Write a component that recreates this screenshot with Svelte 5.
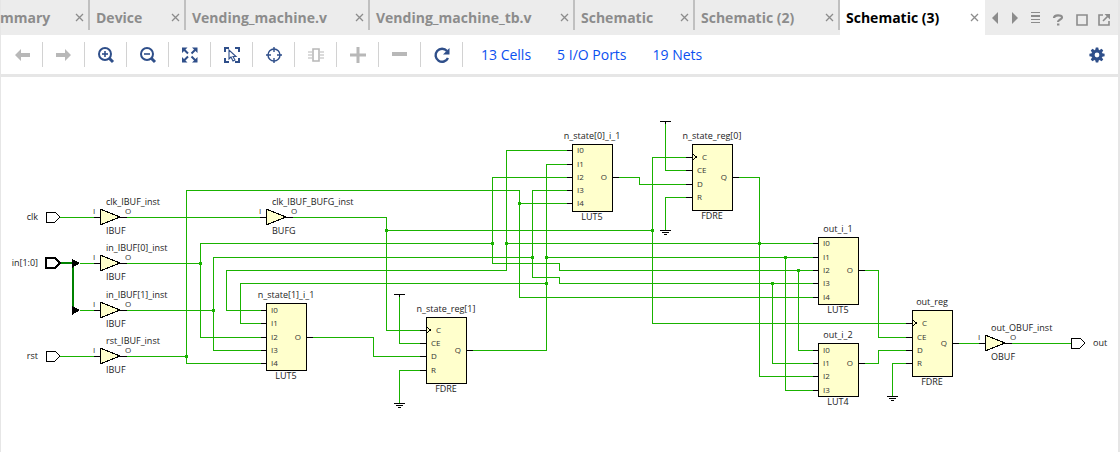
<script>
  const tabs = [
    { label: 'mmary', width: 90 },
    { label: 'Device', width: 96 },
    { label: 'Vending_machine.v', width: 184 },
    { label: 'Vending_machine_tb.v', width: 205 },
    { label: 'Schematic', width: 120 },
    { label: 'Schematic (2)', width: 145 },
    { label: 'Schematic (3)', width: 145, active: true }
  ];

  const tools = [
    { id: 'back', label: 'Back', off: true },
    { id: 'forward', label: 'Forward', off: true },
    { id: 'zoomin', label: 'Zoom in' },
    { id: 'zoomout', label: 'Zoom out' },
    { id: 'fit', label: 'Zoom fit' },
    { id: 'select', label: 'Select area' },
    { id: 'target', label: 'Autofit selection' },
    { id: 'chip', label: 'Expand cell', off: true },
    { id: 'plus', label: 'Add', off: true },
    { id: 'minus', label: 'Remove', off: true },
    { id: 'refresh', label: 'Regenerate' }
  ];

  const stats = ['13 Cells', '5 I/O Ports', '19 Nets'];

  const wires = [
    'M60 217H94', 'M80 263H94', 'M80 310H94', 'M60 356H94',
    'M126 217H261', 'M292 217H386V330H420', 'M386 230H652',
    'M126 263H200', 'M492 243H200V337H261',
    'M126 310H213', 'M532 257H213V350H261',
    'M126 356H186', 'M261 363H186V190H519V297H813', 'M519 203H567',
    'M261 310H226V270H506V150H567', 'M506 243H813',
    'M261 323H240V283H546', 'M472 350H546V164H567', 'M546 257H813',
    'M567 177H492V263H559V270H813',
    'M567 190H532V277H559V283H813',
    'M312 337H373V356H420',
    'M399 296V343H420', 'M420 370H399V403',
    'M618 177H639V184H686',
    'M686 157H652V323H906',
    'M665 123V170H686', 'M686 197H665V230',
    'M738 177H759V376H813',
    'M772 283V363H813', 'M785 257V390H813', 'M798 270V350H813',
    'M864 270H878V337H906', 'M864 363H878V350H906',
    'M906 363H892V396', 'M958 343H979', 'M1011 343H1071'
  ];

  const joints = [
    [386, 230], [200, 263], [213, 310], [186, 356], [519, 203], [492, 243], [506, 243],
    [532, 257], [546, 257], [546, 283], [652, 230], [759, 243], [785, 257], [798, 270], [772, 283]
  ];

  const lut = (name, type, x, y, h, ys, out) => ({
    name, type, x, y, h, out, q: 'O', stub: 5,
    pins: ys.map((py, i) => ({ t: 'I' + i, y: py }))
  });
  const reg = (name, x, y, ys, out) => ({
    name, type: 'FDRE', x, y, h: 66, out, q: 'Q', stub: 6, clock: true,
    pins: ['C', 'CE', 'D', 'R'].map((t, i) => ({ t, y: ys[i] }))
  });
  const cells = [
    lut('n_state[1]_i_1', 'LUT5', 266, 303, 67, [310, 323, 337, 350, 363], 337),
    lut('n_state[0]_i_1', 'LUT5', 572, 144, 67, [150, 164, 177, 190, 203], 177),
    lut('out_i_1', 'LUT5', 818, 237, 67, [243, 257, 270, 283, 297], 270),
    lut('out_i_2', 'LUT4', 818, 343, 53, [350, 363, 376, 390], 363),
    reg('n_state_reg[1]', 426, 317, [330, 343, 356, 370], 350),
    reg('n_state_reg[0]', 692, 144, [157, 170, 184, 197], 177),
    reg('out_reg', 912, 310, [323, 337, 350, 363], 343)
  ];

  const buffers = [
    { name: 'clk_IBUF_inst', type: 'IBUF', x: 100, y: 217 },
    { name: 'in_IBUF[0]_inst', type: 'IBUF', x: 100, y: 263 },
    { name: 'in_IBUF[1]_inst', type: 'IBUF', x: 100, y: 310 },
    { name: 'rst_IBUF_inst', type: 'IBUF', x: 100, y: 356 },
    { name: 'clk_IBUF_BUFG_inst', type: 'BUFG', x: 266, y: 217 },
    { name: 'out_OBUF_inst', type: 'OBUF', x: 985, y: 343 }
  ];

  const ports = [
    { name: 'clk', x: 46, y: 217 },
    { name: 'in[1:0]', x: 46, y: 263, bus: true },
    { name: 'rst', x: 46, y: 356 },
    { name: 'out', x: 1071, y: 343, output: true }
  ];

  const supplies = [[399, 294], [665, 121]];
  const grounds = [[399, 403], [665, 230], [892, 396]];
</script>

<div class="window">
  <header class="tabbar">
    <nav class="tabs" aria-label="Documents">
      {#each tabs as tab}
        <div class="tab" class:active={tab.active} style="width: {tab.width}px">
          <button class="name">{tab.label}</button>
          <button class="close" aria-label="Close">
            <svg width="9" height="9" viewBox="0 0 9 9"><path d="M1 1L8 8M8 1L1 8" stroke-width="1.300" /></svg>
          </button>
        </div>
      {/each}
    </nav>
    <div class="winctl">
      <button aria-label="Previous tab"><svg width="14" height="14" viewBox="0 0 14 14"><path class="solid" d="M10 1V13L4 7Z" /></svg></button>
      <button aria-label="Next tab"><svg width="14" height="14" viewBox="0 0 14 14"><path class="solid" d="M4 1V13L10 7Z" /></svg></button>
      <button aria-label="Tab list"><svg width="14" height="14" viewBox="0 0 14 14"><path class="solid" d="M3 1h9v1H3zM3 4h9v2H3zM3 8h9v1H3zM3 11h9v1H3z" /></svg></button>
      <button class="low help" aria-label="Help"><svg width="14" height="14" viewBox="0 0 14 14"><path d="M3 5C3 1.500 11 1.500 11 4.500C11 6.500 7 6.500 7 9" stroke-width="2.200" /><path class="solid" d="M6 10.500h2.400v2H6z" /></svg></button>
      <button class="low" aria-label="Maximize"><svg width="14" height="14" viewBox="0 0 14 14"><path d="M2 2H12V12H2Z" stroke-width="1.600" /></svg></button>
      <button class="low" aria-label="Float"><svg width="14" height="14" viewBox="0 0 14 14"><path d="M6 2H2V12H12V8M6 8L11 3" stroke-width="1.600" /><path class="solid" d="M7.500 1H13V6.500Z" /></svg></button>
    </div>
  </header>

  <div class="toolbar">
    {#each tools as tool}
      <button class="tool" class:off={tool.off} aria-label={tool.label}>
        <svg width="18" height="18" viewBox="0 0 18 18">
          {#if tool.id === 'back'}
            <path class="solid" d="M2 9L8 3V7H17V11H8V15Z" />
          {:else if tool.id === 'forward'}
            <path class="solid" d="M16 9L10 3V7H1V11H10V15Z" />
          {:else if tool.id === 'zoomin' || tool.id === 'zoomout'}
            <circle cx="8" cy="8" r="6" stroke-width="2" />
            <path d="M12 12L16 16" stroke-width="3" />
            <path d="M5 8H11" stroke-width="1.600" />
            {#if tool.id === 'zoomin'}<path d="M8 5V11" stroke-width="1.600" />{/if}
          {:else if tool.id === 'fit'}
            <path class="solid" d="M1 1.500H6.500L1 7ZM16.500 1.500V7L11 1.500ZM1 16.500V11L6.500 16.500ZM16.500 16.500H11L16.500 11Z" />
            <path d="M3 3.500L7 7.500M14.500 3.500L10.500 7.500M3 14.500L7 10.500M14.500 14.500L10.500 10.500" stroke-width="2" />
          {:else if tool.id === 'select'}
            <path d="M2 6V2H6M12 2H16V6M2 12V16H6M12 16H16V12" stroke-width="2" />
            <path d="M6 4V13L8 11L10 15L12 14L10 10.500H13Z" stroke-width="1.100" />
          {:else if tool.id === 'target'}
            <circle cx="9" cy="9" r="6" stroke-width="1.400" />
            <path d="M9 1V6M9 12V17M1 9H6M12 9H17" stroke-width="1.400" />
          {:else if tool.id === 'chip'}
            <path d="M6 3H12V15H6Z" stroke-width="1.600" />
            <path d="M1 6H5M1 9H5M1 12H5M13 6H17M13 9H17M13 12H17" stroke-width="1.200" />
          {:else if tool.id === 'plus'}
            <path d="M9 1V17M1 9H17" stroke-width="3" />
          {:else if tool.id === 'minus'}
            <path d="M1 8H16" stroke-width="4" />
          {:else}
            <path d="M14 5A6.500 6.500 0 1 0 15 12" stroke-width="2.400" />
            <path class="solid" d="M16.500 2V8.500H10Z" />
          {/if}
        </svg>
      </button>
    {/each}
    <div class="stats">
      {#each stats as stat}<a href="#top">{stat}</a>{/each}
    </div>
    <button class="gear" aria-label="Settings">
      <svg width="16" height="16" viewBox="-8 -8 16 16">
        <circle r="4" stroke-width="3.200" />
        {#each [0, 45, 90, 135, 180, 225, 270, 315] as a}
          <path class="solid" d="M-1.800 -5L-1.200 -7.600H1.200L1.800 -5Z" transform="rotate({a})" />
        {/each}
      </svg>
    </button>
  </div>

  <main class="canvas">
    <svg class="schematic" width="1117" height="375" viewBox="1 77 1117 375" role="img" aria-label="Schematic">
      {#each wires as d}<path class="wire" {d} />{/each}
      {#each joints as [x, y]}<rect class="joint" x={x - 1} y={y - 1} width="3" height="3" />{/each}
      <path class="bus" d="M61 263H73V310" />
      <path class="tap" d="M72 259V268L80 263ZM72 306V315L80 310Z" />

      {#each supplies as [x, y]}
        <path class="ink" d="M{x - 5} {y}H{x + 6}M{x} {y}V{y + 3}" />
      {/each}
      {#each grounds as [x, y]}
        <path class="ink" d="M{x - 5} {y}H{x + 6}M{x - 3} {y + 2}H{x + 4}M{x - 1} {y + 4}H{x + 2}" />
      {/each}

      {#each buffers as b}
        <path class="ink" d="M{b.x - 6} {b.y}H{b.x}M{b.x + 20} {b.y}H{b.x + 27}" />
        <path class="body" d="M{b.x} {b.y - 8}V{b.y + 8}L{b.x + 20} {b.y}Z" />
        <text x={b.x + 6} y={b.y - 12}>{b.name}</text>
        <text x={b.x + 6} y={b.y + 17}>{b.type}</text>
        <text class="pin" x={b.x - 7} y={b.y - 3}>I</text>
        <text class="pin" x={b.x + 25} y={b.y - 3}>O</text>
      {/each}

      {#each cells as c}
        <rect class="body" x={c.x} y={c.y} width="40" height={c.h} />
        <text class="mid" x={c.x + 20} y={c.y - 5}>{c.name}</text>
        <text class="mid" x={c.x + 20} y={c.y + c.h + 9}>{c.type}</text>
        <path class="ink" d="M{c.x + 40} {c.out}H{c.x + 47}" />
        <text class="pin end" x={c.x + 35} y={c.out + 3}>{c.q}</text>
        {#each c.pins as p, i}
          <path class="ink" d="M{c.x - c.stub} {p.y}H{c.x}" />
          <text class="pin" x={c.x + (c.clock && i === 0 ? 10 : 5)} y={p.y + 3}>{p.t}</text>
        {/each}
        {#if c.clock}
          <path class="ink" d="M{c.x} {c.pins[0].y - 3}L{c.x + 5} {c.pins[0].y}L{c.x} {c.pins[0].y + 3}" />
        {/if}
      {/each}

      {#each ports as p}
        <path class="port" class:thick={p.bus} d="M{p.x} {p.y - 5}H{p.x + 9}L{p.x + 14} {p.y}L{p.x + 9} {p.y + 5}H{p.x}Z" />
        <text class="label" class:end={!p.output} x={p.output ? p.x + 22 : p.x - 8} y={p.y + 3}>{p.name}</text>
      {/each}
    </svg>
  </main>
</div>

<style>
  :global(body) { margin: 0; }
  .window {
    min-height: 100vh;
    box-sizing: border-box;
    display: flex;
    flex-direction: column;
    background: #fff;
    border-left: 1px solid #e6e6e6;
    border-right: 2px solid #e6e6e6;
    font-family: "Open Sans", "Noto Sans", sans-serif;
  }
  button {
    border: 0;
    padding: 0;
    background: none;
    font: inherit;
    color: inherit;
    display: flex;
    align-items: center;
    justify-content: center;
  }
  svg { display: block; flex: none; fill: none; stroke: currentColor; }
  .solid { fill: currentColor; stroke: none; }

  .tabbar {
    height: 35px;
    display: flex;
    justify-content: space-between;
    background: #ececec;
    color: #8c8c8c;
  }
  .tabs { display: flex; margin-left: -1px; }
  .tab {
    box-sizing: border-box;
    flex: none;
    display: flex;
    align-items: center;
    justify-content: space-between;
    padding: 0 6px;
    background: linear-gradient(#c0c0c0, #c0c0c0) right top / 2px 30px no-repeat;
    font-size: 14px;
    font-weight: 700;
    white-space: nowrap;
  }
  .tab:first-child { padding-left: 0; }
  .tab.active { background: #fff; color: #000; }
  .close { width: 9px; color: #8c8c8c; }
  .winctl { display: flex; align-items: center; color: #8c8c8c; padding-right: 6px; }
  .winctl button { width: 20px; }
  .winctl .low { width: 22px; padding-top: 4px; }
  .winctl .help { width: 26px; }

  .toolbar {
    height: 39px;
    display: flex;
    align-items: center;
    border-bottom: 3px solid #e6e6e6;
    color: #2f4f8a;
  }
  .tool {
    width: 42px;
    height: 25px;
    box-sizing: border-box;
    border-right: 1px solid #d2d2d2;
  }
  .tool.off { color: #b8b8b8; }
  .stats { display: flex; gap: 26px; padding-left: 18px; font-size: 14px; }
  .stats a { color: #0a50f0; text-decoration: none; }
  .gear { margin-left: auto; padding-right: 13px; }

  .canvas { flex: 1; overflow: hidden; }
  .schematic { shape-rendering: crispEdges; }
  .wire { stroke: #19b200; }
  .joint { fill: #19b200; stroke: none; }
  .bus { stroke: #008200; stroke-width: 2; }
  .tap { fill: #000; stroke: none; }
  .ink { stroke: #000; }
  .body { fill: #ffffcc; stroke: #000; }
  .port { fill: #fff; stroke: #000; }
  .thick { stroke-width: 2; }
  text { fill: #222; stroke: none; font-size: 9px; }
  .pin { font-size: 8px; fill: #333; }
  .mid { text-anchor: middle; }
  .end { text-anchor: end; }
</style>
